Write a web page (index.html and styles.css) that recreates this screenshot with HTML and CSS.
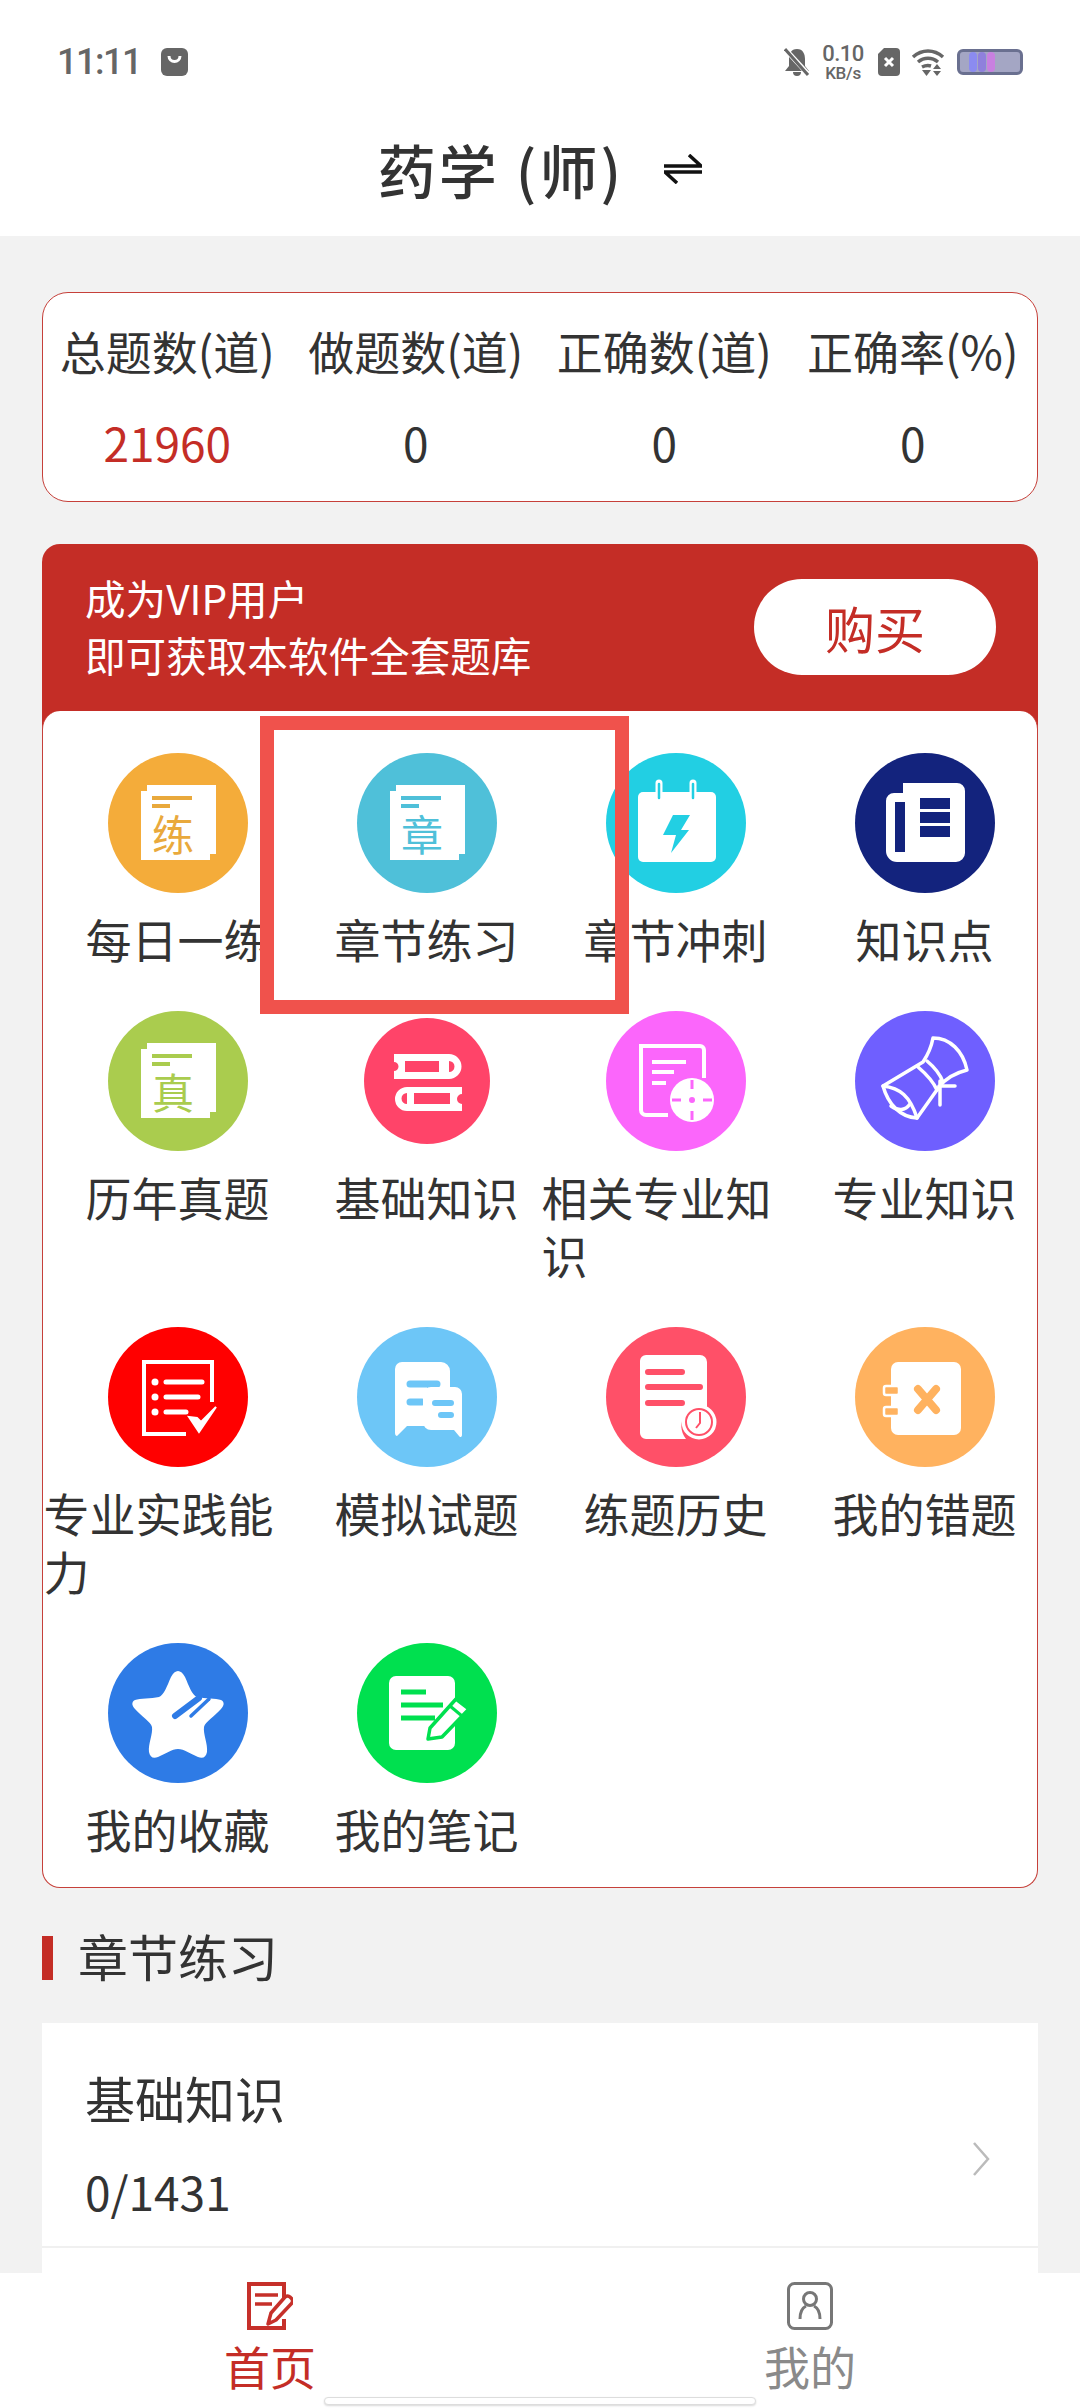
FILE: index.html
```html
<!DOCTYPE html>
<html lang="zh">
<head>
<meta charset="utf-8">
<title>药学(师)</title>
<link rel="stylesheet" href="styles.css">
</head>
<body>
<div class="app">
  <header class="top">
    <div class="status">
      <div class="status-left">
        <span class="time">11:11</span>
        <svg class="s-bag" viewBox="0 0 27 28"><rect width="27" height="28" rx="6" fill="#666"/><path d="M8 8a5.500 5.500 0 0 0 11 0" fill="none" stroke="#fff" stroke-width="3"/></svg>
      </div>
      <div class="status-right">
        <svg class="s-bell" viewBox="0 0 26 28"><path d="M13 1c6 0 8 5 8 10v7l4 5H1l4-5v-7c0-5 2-10 8-10zM9 24h8a4 4 0 0 1-8 0z" fill="#666"/><path d="M1 1l24 26" stroke="#fff" stroke-width="5"/><path d="M1 1l23 26" stroke="#666" stroke-width="3"/></svg>
        <div class="speed"><span class="speed-n">0.10</span><span class="speed-u">KB/s</span></div>
        <svg class="s-sim" viewBox="0 0 22 28"><path d="M6 0h12a4 4 0 0 1 4 4v20a4 4 0 0 1-4 4H4a4 4 0 0 1-4-4V6z" fill="#666"/><path d="M7 10l8 8M15 10l-8 8" stroke="#fff" stroke-width="3"/></svg>
        <svg class="s-wifi" viewBox="0 0 34 28" fill="none" stroke="#666" stroke-width="3.500"><path d="M2 9c9-8 21-8 30 0"/><path d="M7 14c6-5 14-5 20 0"/><path d="M11 19c2-1 6-2 9-1"/><path d="M11 22h9l-4.500 6z" fill="#666" stroke="none"/><path d="M26 16l4 5h-8zM26 28l-4-5h8z" fill="#666" stroke="none"/></svg>
        <div class="battery"><i class="b1"></i><i class="b2"></i><i class="b3"></i></div>
      </div>
    </div>
    <div class="title-row">
      <h1 class="title">药学 (师)</h1>
      <svg class="swap" viewBox="0 0 38 30" fill="none" stroke="#111" stroke-width="3.500"><path d="M0 12h37L25 1"/><path d="M38 18H1l12 11"/></svg>
    </div>
  </header>

  <main class="main">
    <section class="stats">
      <div class="stat"><div class="stat-l">总题数(道)</div><div class="stat-v red">21960</div></div>
      <div class="stat"><div class="stat-l">做题数(道)</div><div class="stat-v">0</div></div>
      <div class="stat"><div class="stat-l">正确数(道)</div><div class="stat-v">0</div></div>
      <div class="stat"><div class="stat-l">正确率(%)</div><div class="stat-v">0</div></div>
    </section>

    <section class="vip">
      <div class="vip-head">
        <div class="vip-text"><div>成为VIP用户</div><div>即可获取本软件全套题库</div></div>
        <button class="buy">购买</button>
      </div>
      <div class="panel">
        <div class="grid">
          <div class="cell"><svg class="ico" viewBox="0 0 140 140"><circle cx="70" cy="70" r="70" fill="#f4ac3a"/><path d="M39 32h69v69h-6v6H33V38h6z" fill="#fff"/><path d="M44 45h40M44 53h18" stroke="#e9a93c" stroke-width="4"/><text x="65" y="98" class="ico-t" fill="#e9a93c">练</text></svg><div class="label">每日一练</div></div>
          <div class="cell"><svg class="ico" viewBox="0 0 140 140"><circle cx="70" cy="70" r="70" fill="#4fc0d9"/><path d="M39 32h69v69h-6v6H33V38h6z" fill="#fff"/><path d="M44 45h40M44 53h18" stroke="#4fc0d9" stroke-width="4"/><text x="65" y="98" class="ico-t" fill="#4fc0d9">章</text></svg><div class="label">章节练习</div></div>
          <div class="cell"><svg class="ico" viewBox="0 0 140 140"><circle cx="70" cy="70" r="70" fill="#22cfe3"/><path d="M37 39h68a5 5 0 0 1 5 5v60a5 5 0 0 1-5 5H37a5 5 0 0 1-5-5V44a5 5 0 0 1 5-5z" fill="#fff"/><path d="M53 30v16M87 30v16" stroke="#fff" stroke-width="7" stroke-linecap="round"/><path d="M53 31v14M87 31v14" stroke="#22cfe3" stroke-width="2.500" stroke-linecap="round"/><path d="M67 62h17l-9 15h8L65 100l5-18h-13z" fill="#22cfe3"/></svg><div class="label">章节冲刺</div></div>
          <div class="cell"><svg class="ico" viewBox="0 0 140 140"><circle cx="70" cy="70" r="70" fill="#13237d"/><path d="M48 30h54a8 8 0 0 1 8 8v62a9 9 0 0 1-9 9H42a11 11 0 0 1-11-11V48a8 8 0 0 1 8-8h9z" fill="#fff"/><path d="M40 49h10v50H40zM65 45h30v11H65zM65 59h30v11H65zM65 73h30v11H65z" fill="#13237d"/></svg><div class="label">知识点</div></div>

          <div class="cell"><svg class="ico" viewBox="0 0 140 140"><circle cx="70" cy="70" r="70" fill="#aacc4e"/><path d="M39 32h69v69h-6v6H33V38h6z" fill="#fff"/><path d="M44 45h40M44 53h18" stroke="#aacc4e" stroke-width="4"/><text x="65" y="98" class="ico-t" fill="#aacc4e">真</text></svg><div class="label">历年真题</div></div>
          <div class="cell"><svg class="ico" viewBox="0 0 140 140"><circle cx="70" cy="70" r="63" fill="#ff4469"/><path d="M37 43h55a12.500 12.500 0 0 1 0 25H37v-8a4.500 4.500 0 0 0 0-9zM105 76H50a12 12 0 0 0 0 24h55v-7a4.500 4.500 0 0 1 0-10z" fill="#fff"/><path d="M48 50h34v11H48zM92 50a5.500 5.500 0 0 1 0 11zM57 82h36v11H57zM50 82a5.500 5.500 0 0 0 0 11z" fill="#ff4469"/></svg><div class="label">基础知识</div></div>
          <div class="cell"><svg class="ico" viewBox="0 0 140 140"><circle cx="70" cy="70" r="70" fill="#fb66fb"/><path d="M62 104H40a5 5 0 0 1-5-5V35h59a4 4 0 0 1 4 4v28" fill="none" stroke="#fff" stroke-width="4"/><path d="M46 51h34M46 61h22M46 72h14" stroke="#fff" stroke-width="4"/><circle cx="86" cy="89" r="22" fill="#fff"/><path d="M86 69v9M86 100v9M66 89h9M97 89h9" stroke="#fb66fb" stroke-width="3"/><circle cx="86" cy="89" r="3" fill="#fb66fb"/></svg><div class="label label-w">相关专业知识</div></div>
          <div class="cell"><svg class="ico" viewBox="0 0 140 140"><circle cx="70" cy="70" r="70" fill="#6f5fff"/><g fill="none" stroke="#fff" stroke-width="3.500" stroke-linejoin="round" stroke-linecap="round"><path d="M78 27c17 0 30 13 34 32-12 3-22 9-28 17l-22 31c-17-1-29-14-34-32l40-24c4-6 8-13 10-24z"/><path d="M28 75c17 2 27 10 34 32"/><path d="M36 95c7 5 14 5 19-2"/><path d="M72 50c6 5 13 13 16 21M63 56c7 6 15 14 19 23"/><path d="M84 75h16M85 70v24"/></g></svg><div class="label">专业知识</div></div>

          <div class="cell"><svg class="ico" viewBox="0 0 140 140"><circle cx="70" cy="70" r="70" fill="#f00"/><path d="M78 107H36V35h68v40" fill="none" stroke="#fff" stroke-width="4"/><g stroke="#fff" stroke-width="5" stroke-linecap="round"><path d="M58 55h36M58 70h32M58 85h20"/></g><g fill="#fff"><circle cx="47" cy="55" r="3.500"/><circle cx="47" cy="70" r="3.500"/><circle cx="47" cy="85" r="3.500"/></g><path d="M81 90l10 15 17-25-15 15-4-4z" fill="#fff" stroke="#fff" stroke-width="2"/></svg><div class="label label-w">专业实践能力</div></div>
          <div class="cell"><svg class="ico" viewBox="0 0 140 140"><circle cx="70" cy="70" r="70" fill="#6dc6f7"/><path d="M45 35h39a9 9 0 0 1 9 9v16H70v39H50l-10 10c-1 0-2-1-2-3V42a7 7 0 0 1 7-7z" fill="#fff"/><g stroke="#6dc6f7" stroke-width="7" stroke-linecap="round"><path d="M53 57h27M53 75h12"/></g><path d="M74 60h24a7 7 0 0 1 7 7v41c0 2-2 3-3 1l-5-6H74a8 8 0 0 1-8-8V68a8 8 0 0 1 8-8z" fill="#fff"/><g stroke="#6dc6f7" stroke-width="6" stroke-linecap="round"><path d="M78 76h16M84 88h10"/></g></svg><div class="label">模拟试题</div></div>
          <div class="cell"><svg class="ico" viewBox="0 0 140 140"><circle cx="70" cy="70" r="70" fill="#ff5068"/><path d="M40 28h54a7 7 0 0 1 7 7v45a20 20 0 0 0-21 32H40a6 6 0 0 1-6-6V34a6 6 0 0 1 6-6z" fill="#fff"/><g stroke="#ff5068" stroke-width="6" stroke-linecap="round"><path d="M42 45h34M42 60h52M42 76h34"/></g><circle cx="93" cy="95" r="16" fill="#fff" stroke="#fff" stroke-width="3"/><circle cx="93" cy="95" r="13" fill="none" stroke="#ff5068" stroke-width="2"/><path d="M94 85v11l-4 5" fill="none" stroke="#ff5068" stroke-width="2"/></svg><div class="label">练题历史</div></div>
          <div class="cell"><svg class="ico" viewBox="0 0 140 140"><circle cx="70" cy="70" r="70" fill="#ffb25f"/><rect x="36" y="35" width="70" height="73" rx="7" fill="#fff"/><rect x="29" y="59" width="15" height="9" rx="2" fill="#ffb25f" stroke="#fff" stroke-width="2.500"/><rect x="29" y="80" width="15" height="9" rx="2" fill="#ffb25f" stroke="#fff" stroke-width="2.500"/><path d="M63 62l18 21M81 62L63 83" stroke="#ffb25f" stroke-width="8" stroke-linecap="round"/></svg><div class="label">我的错题</div></div>

          <div class="cell"><svg class="ico" viewBox="0 0 140 140"><circle cx="70" cy="70" r="70" fill="#2e7be6"/><path d="M63 34c4-8 10-8 14 0 4 9 7 18 12 20 8 2 19 1 24 3 4 2 3 6 0 9-6 7-16 13-17 18-1 7 4 17 3 25-1 5-4 7-9 5-7-3-14-8-20-8s-13 5-20 8c-5 2-8 0-9-5-1-8 4-18 3-25-1-5-11-11-17-18-3-3-4-7 0-9 5-2 16-1 24-3 5-2 8-11 12-20z" fill="#fff"/><path d="M67 73l24-18" stroke="#2e7be6" stroke-width="6" stroke-linecap="round"/><path d="M83 73l18-17" stroke="#2e7be6" stroke-width="3.500" stroke-linecap="round"/></svg><div class="label">我的收藏</div></div>
          <div class="cell"><svg class="ico" viewBox="0 0 140 140"><circle cx="70" cy="70" r="70" fill="#00e04f"/><rect x="32" y="33" width="66" height="74" rx="7" fill="#fff"/><path d="M44 49h25M44 62h42M44 75h34" stroke="#00e04f" stroke-width="5"/><path d="M71 96l2-11 26-29 13 10-27 28z" fill="#fff" stroke="#00e04f" stroke-width="3.500" stroke-linejoin="round"/><path d="M93 63l12 10" stroke="#00e04f" stroke-width="3"/></svg><div class="label">我的笔记</div></div>
        </div>
        <div class="mark" aria-hidden="true"></div>
      </div>
    </section>

    <h2 class="sec"><span class="sec-bar"></span>章节练习</h2>

    <section class="list">
      <div class="row">
        <div class="row-body"><div class="row-name">基础知识</div><div class="row-count">0/1431</div></div>
        <svg class="chev" viewBox="0 0 18 36"><path d="M2 2l14 16L2 34" fill="none" stroke="#bbb" stroke-width="2.500"/></svg>
      </div>
      <div class="row"></div>
    </section>
  </main>

  <nav class="tabs">
    <div class="tab tab-on">
      <svg class="tab-ico" viewBox="0 0 46 48"><path d="M37 20V2H2v44h35v-9" fill="none" stroke="#c6302a" stroke-width="4"/><path d="M8 13h23M8 22h17" stroke="#c6302a" stroke-width="3.500"/><path d="M21 42l3-11 14-16q3-2 5 0l2 2q1 2 0 4L29 38z" fill="#fff" stroke="#c6302a" stroke-width="3.500" stroke-linejoin="round"/></svg>
      <span class="tab-l">首页</span>
    </div>
    <div class="tab">
      <svg class="tab-ico" viewBox="0 0 46 48" fill="none" stroke="#777"><rect x="1.500" y="1.500" width="43" height="45" rx="6" stroke-width="3"/><circle cx="23" cy="17" r="6.500" stroke-width="3"/><path d="M13 37c0-6 2-11 6-13M33 37c0-6-2-11-6-13" stroke-width="3"/></svg>
      <span class="tab-l">我的</span>
    </div>
    <div class="home-bar" aria-hidden="true"></div>
  </nav>
</div>
</body>
</html>
```
FILE: styles.css
```css
* { box-sizing: border-box; }
html, body { margin: 0; padding: 0; }
body {
  width: 1080px;
  height: 2408px;
  overflow: hidden;
  background: #f2f2f2;
  font-family: "Noto Sans CJK SC", "Noto Sans", sans-serif;
  color: #333;
}
.app { display: flex; flex-direction: column; height: 2408px; }

.top { background: #fff; height: 236px; flex: none; }
.status {
  height: 124px;
  padding: 0 57px;
  display: flex;
  align-items: center;
  justify-content: space-between;
}
.status-left { display: flex; align-items: center; gap: 20px; }
.time { font-family: Roboto, sans-serif; font-size: 36px; font-weight: 500; color: #666; letter-spacing: -1.500px; }
.s-bag { width: 27px; height: 28px; display: block; }
.status-right { display: flex; align-items: center; gap: 12px; }
.s-bell { width: 26px; height: 28px; display: block; }
.speed { display: flex; flex-direction: column; align-items: center; font-family: Roboto, sans-serif; color: #666; width: 42px; }
.speed-n { font-size: 22px; line-height: 22px; font-weight: 500; letter-spacing: -.5px; }
.speed-u { font-size: 17px; line-height: 17px; font-weight: 500; letter-spacing: -.3px; }
.s-sim { width: 22px; height: 28px; display: block; margin-left: 2px; }
.s-wifi { width: 34px; height: 28px; display: block; margin-left: -1px; }
.battery {
  width: 66px; height: 26px;
  border: 3px solid #6a7090;
  border-radius: 6px;
  background: #a4a6c4;
  display: flex;
  padding-left: 9px;
  gap: 1px;
}
.battery i { display: block; width: 8px; height: 100%; border-radius: 4px; }
.b1 { background: #8b8bf0; }
.b2 { background: #8f80dc; }
.b3 { background: #c880e0; }

.title-row { height: 90px; display: flex; align-items: center; justify-content: center; }
.title { margin: 0; font-size: 58px; font-weight: 500; line-height: 90px; color: #333; letter-spacing: 3px; }
.swap { width: 38px; height: 30px; display: block; margin-left: 40px; }

.main { flex: 1; min-height: 0; overflow: hidden; padding: 56px 42px 0; }

.stats {
  height: 210px;
  background: #fff;
  border: 1px solid #c6403a;
  border-radius: 26px;
  display: grid;
  grid-template-columns: repeat(4, 1fr);
  padding-top: 23px;
}
.stat { text-align: center; }
.stat-l { font-size: 46px; line-height: 68px; white-space: nowrap; }
.stat-v { font-size: 46px; line-height: 68px; margin-top: 24px; }
.red { color: #c42d26; }

.vip { margin-top: 42px; }
.vip-head {
  height: 185px;
  padding: 25px 42px 0 43px;
  display: flex;
  justify-content: space-between;
  align-items: flex-start;
  background: #c42d26;
  border-radius: 18px 18px 0 0;
}
.vip-text { font-size: 40.600px; line-height: 57px; color: #fff; }
.buy {
  width: 242px; height: 96px;
  margin-top: 10px;
  border: 0; border-radius: 48px;
  background: #fff;
  color: #c42d26;
  font-family: inherit;
  font-size: 50px;
  padding: 0;
}
.panel {
  position: relative;
  margin-top: -18px;
  height: 1177px;
  background: #fff;
  border: 1px solid #c6403a;
  border-top: 0;
  border-radius: 18px;
  padding: 42px 0 0 10px;
}
.grid { display: grid; grid-template-columns: repeat(4, 249px); row-gap: 41px; }
.cell { display: flex; flex-direction: column; align-items: center; }
.ico { width: 140px; height: 140px; display: block; flex: none; }
.ico-t { font-size: 42px; text-anchor: middle; font-family: "Noto Sans CJK SC", sans-serif; }
.label {
  margin: 16px 0 3px;
  font-size: 46px;
  line-height: 58px;
  width: max-content;
  max-width: 268px;
  flex: none;
  color: #333;
}
.mark {
  position: absolute;
  left: 217px;
  top: 5px;
  width: 369px;
  height: 298px;
  border: 14px solid #f0524c;
}

.sec {
  margin: 37px 0 38px;
  height: 60px;
  display: flex;
  align-items: center;
  font-size: 50px;
  font-weight: 400;
  color: #333;
}
.sec-bar { width: 11px; height: 44px; background: #c42d26; margin-right: 25px; position: relative; top: 3px; }

.list { background: #fff; }
.row {
  height: 225px;
  padding: 42px 48px 0 43px;
  display: flex;
  align-items: flex-start;
  justify-content: space-between;
  border-bottom: 2px solid #f0f0f0;
}
.row-name { font-size: 50px; line-height: 64px; }
.row-count { font-size: 46px; line-height: 64px; margin-top: 30px; }
.chev { width: 18px; height: 36px; display: block; margin-top: 76px; }

.tabs {
  position: relative;
  flex: none;
  height: 135px;
  background: #fff;
  display: grid;
  grid-template-columns: 1fr 1fr;
  padding-top: 9px;
}
.tab { display: flex; flex-direction: column; align-items: center; color: #8a8a8a; }
.tab-on { color: #c42d26; }
.tab-ico { width: 46px; height: 48px; display: block; }
.tab-l { font-size: 46px; line-height: 62px; margin-top: 4px; }
.home-bar {
  position: absolute;
  left: 324px;
  top: 124px;
  width: 432px;
  height: 8px;
  background: #fff;
  border: 1px solid #ddd;
  border-radius: 4px;
  box-shadow: 0 1px 2px rgba(0,0,0,.15);
}
```
